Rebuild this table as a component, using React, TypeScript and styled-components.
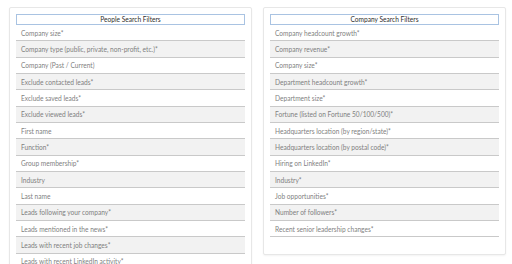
import styled, { createGlobalStyle } from 'styled-components';

const GlobalStyle = createGlobalStyle`
  html, body {
    margin: 0;
    padding: 0;
    background: #ffffff;
  }
  body {
    font-family: Lato, "Open Sans", sans-serif;
    overflow: hidden;
  }
`;

const Page = styled.div`
  display: grid;
  grid-template-columns: 243px 243px;
  column-gap: 11px;
  align-items: start;
  padding: 7px 6px 0 9px;
  height: 264px;
  box-sizing: border-box;
  overflow: hidden;
`;

const Card = styled.section`
  background: #ffffff;
  border: 1px solid #e7e7e7;
  border-radius: 2px;
  box-shadow: 0 1px 2px rgba(0, 0, 0, 0.05);
  padding: 6px 6px 17px 6px;
`;

const Title = styled.h3`
  margin: 0;
  height: 11px;
  border: 1px solid #a9c3e2;
  box-sizing: border-box;
  font-size: 6.6px;
  font-weight: 400;
  line-height: 9px;
  text-align: center;
  color: #2e2e2e;
`;

const List = styled.ul`
  list-style: none;
  margin: 0;
  padding: 0;
`;

const Row = styled.li<{ shaded: boolean }>`
  height: 16.35px;
  box-sizing: border-box;
  display: flex;
  align-items: center;
  padding-left: 5px;
  border-bottom: 1px solid #c9c9c9;
  background: ${p => (p.shaded ? '#f2f2f2' : '#ffffff')};
  font-size: 6.6px;
  color: #7f7f7f;
  white-space: nowrap;
`;

const peopleFilters = [
  'Company size*',
  'Company type (public, private, non-profit, etc.)*',
  'Company (Past / Current)',
  'Exclude contacted leads*',
  'Exclude saved leads*',
  'Exclude viewed leads*',
  'First name',
  'Function*',
  'Group membership*',
  'Industry',
  'Last name',
  'Leads following your company*',
  'Leads mentioned in the news*',
  'Leads with recent job changes*',
  'Leads with recent LinkedIn activity*',
];

const companyFilters = [
  'Company headcount growth*',
  'Company revenue*',
  'Company size*',
  'Department headcount growth*',
  'Department size*',
  'Fortune (listed on Fortune 50/100/500)*',
  'Headquarters location (by region/state)*',
  'Headquarters location (by postal code)*',
  'Hiring on LinkedIn*',
  'Industry*',
  'Job opportunities*',
  'Number of followers*',
  'Recent senior leadership changes*',
];

function FilterCard({ title, items }: { title: string; items: string[] }) {
  return (
    <Card>
      <Title>{title}</Title>
      <List>
        {items.map((item, idx) => (
          <Row key={item} shaded={idx % 2 === 1}>{item}</Row>
        ))}
      </List>
    </Card>
  );
}

export default function App() {
  return (
    <>
      <GlobalStyle />
      <Page>
        <FilterCard title="People Search Filters" items={peopleFilters} />
        <FilterCard title="Company Search Filters" items={companyFilters} />
      </Page>
    </>
  );
}
